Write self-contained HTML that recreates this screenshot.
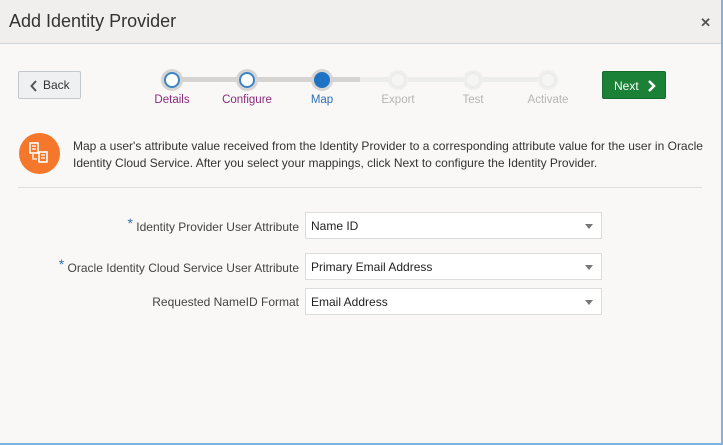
<!DOCTYPE html>
<html><head><style>
*{margin:0;padding:0;box-sizing:border-box}
body{width:723px;height:445px;background:#f9f8f6;font-family:"Liberation Sans",sans-serif;position:relative;overflow:hidden;border-right:2px solid #7fb2e0;border-bottom:2px solid #7fb2e0}
.hdr{position:absolute;left:0;top:0;width:721px;height:44px;background:#f0efee;border-bottom:1px solid #cfd6dc}
.hdr h1{position:absolute;left:9px;top:11px;font-size:18px;font-weight:normal;color:#333}
.x{position:absolute;right:10px;top:15px;font-size:13px;color:#555;font-weight:bold}
.btn{position:absolute;top:71px;height:28px;border-radius:2px;font-size:12px}
.back{left:18px;width:63px;background:#eef0f2;border:1px solid #c4c8cc;color:#333;padding:6px 0 0 24px}
.next{left:602px;width:64px;background:#1b8136;border:1px solid #136c2a;color:#fff;padding:7px 0 0 11px}
.track{position:absolute;top:77px;height:5px}
.c{position:absolute;width:16px;height:16px;border-radius:50%;top:72px}
.lbl{position:absolute;top:94px;font-size:11.5px;width:70px;text-align:center}
.info{position:absolute;left:73px;top:138px;font-size:12px;line-height:17px;color:#333;width:640px}
.div{position:absolute;left:18px;top:187px;width:684px;height:1px;background:#dfe0e1}
.fl{position:absolute;right:422px;font-size:12px;color:#444;text-align:right;white-space:nowrap}
.fl b{color:#2d6fb5;font-weight:normal;font-size:14px;position:relative;top:-3px}
.sel{position:absolute;left:305px;width:297px;height:27px;background:#fff;border:1px solid #dcdcdc;font-size:12px;color:#222;padding:6px 0 0 5px}
.sel:after{content:"";position:absolute;right:8px;top:11px;border-left:4px solid transparent;border-right:4px solid transparent;border-top:5px solid #777}
</style></head><body>
<div class="hdr"><h1>Add Identity Provider</h1><span class="x">✕</span></div>
<div class="btn back"><svg style="position:absolute;left:11px;top:8px" width="8" height="12"><path d="M6 1L1.5 6L6 11" stroke="#555" stroke-width="2" fill="none"/></svg>Back</div>
<div class="track" style="left:172px;width:188px;background:#d5d4d3"></div>
<div class="track" style="left:360px;width:188px;background:#ededec"></div>
<div class="c" style="left:164px;background:#fff;border:2px solid #3d86c6;box-shadow:0 0 0 3px #d5d4d3"></div>
<div class="c" style="left:239px;background:#fff;border:2px solid #3d86c6;box-shadow:0 0 0 3px #d5d4d3"></div>
<div class="c" style="left:314px;background:#1f72c4;border:2px solid #1f72c4;box-shadow:0 0 0 3px #d5d4d3"></div>
<div class="c" style="left:390px;background:#f5f5f4;border:2px solid #ececeb;box-shadow:0 0 0 2px #efefee"></div>
<div class="c" style="left:465px;background:#f5f5f4;border:2px solid #ececeb;box-shadow:0 0 0 2px #efefee"></div>
<div class="c" style="left:540px;background:#f5f5f4;border:2px solid #ececeb;box-shadow:0 0 0 2px #efefee"></div>
<div class="lbl" style="left:137px;color:#8a2c7e">Details</div>
<div class="lbl" style="left:212px;color:#8a2c7e">Configure</div>
<div class="lbl" style="left:287px;color:#2d6fb5">Map</div>
<div class="lbl" style="left:363px;color:#b5b5b5">Export</div>
<div class="lbl" style="left:438px;color:#b5b5b5">Test</div>
<div class="lbl" style="left:513px;color:#b5b5b5">Activate</div>
<div class="btn next">Next<svg style="position:absolute;left:44px;top:8px" width="9" height="12"><path d="M2 1L7 6L2 11" stroke="#fff" stroke-width="2.5" fill="none"/></svg></div>
<div style="position:absolute;left:19px;top:133px;width:41px;height:41px;border-radius:50%;background:#f5772b"></div>
<svg style="position:absolute;left:28px;top:141px" width="22" height="24"><rect x="2" y="2" width="8" height="10" fill="none" stroke="#fff" stroke-width="1.6"/><rect x="11" y="11" width="8" height="10" fill="none" stroke="#fff" stroke-width="1.6"/><path d="M4 5h4M4 8h4M13 14h4M13 17h4M5 13v5h4" stroke="#fff" stroke-width="1.3" fill="none"/></svg>
<div class="info">Map a user's attribute value received from the Identity Provider to a corresponding attribute value for the user in Oracle Identity Cloud Service. After you select your mappings, click Next to configure the Identity Provider.</div>
<div class="div"></div>
<div class="fl" style="top:218px"><b>*</b> Identity Provider User Attribute</div>
<div class="sel" style="top:212px">Name ID</div>
<div class="fl" style="top:259px"><b>*</b> Oracle Identity Cloud Service User Attribute</div>
<div class="sel" style="top:253px">Primary Email Address</div>
<div class="fl" style="top:295px">Requested NameID Format</div>
<div class="sel" style="top:288px">Email Address</div>
</body></html>
